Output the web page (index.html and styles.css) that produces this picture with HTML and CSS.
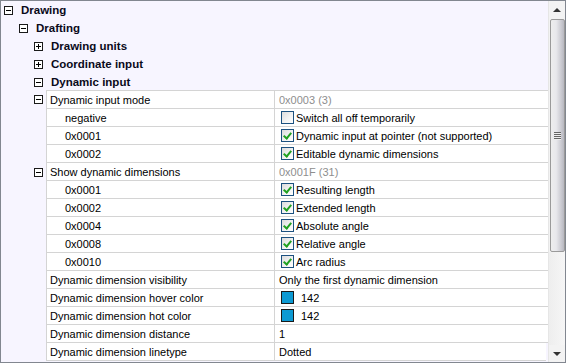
FILE: index.html
```html
<!DOCTYPE html>
<html lang="en">
<head>
  <meta charset="UTF-8" />
  <title>Drawing settings</title>
  <link rel="stylesheet" href="styles.css">
</head>
<body>
  <div class="panel">
    <div class="content">
      <div class="tree-row lvl0"><span class="exp minus"></span><span class="tree-label">Drawing</span></div>
      <div class="tree-row lvl1"><span class="exp minus"></span><span class="tree-label">Drafting</span></div>
      <div class="tree-row lvl2"><span class="exp plus"></span><span class="tree-label">Drawing units</span></div>
      <div class="tree-row lvl2"><span class="exp plus"></span><span class="tree-label">Coordinate input</span></div>
      <div class="tree-row lvl2"><span class="exp minus"></span><span class="tree-label">Dynamic input</span></div>

      <div class="grid">
        <div class="row group">
          <div class="gutter"><span class="exp minus"></span></div>
          <div class="name">Dynamic input mode</div>
          <div class="value muted">0x0003 (3)</div>
        </div>
        <div class="row sub">
          <div class="gutter"></div>
          <div class="name">negative</div>
          <div class="value"><span class="check"></span>Switch all off temporarily</div>
        </div>
        <div class="row sub">
          <div class="gutter"></div>
          <div class="name">0x0001</div>
          <div class="value"><span class="check on"></span>Dynamic input at pointer (not supported)</div>
        </div>
        <div class="row sub">
          <div class="gutter"></div>
          <div class="name">0x0002</div>
          <div class="value"><span class="check on"></span>Editable dynamic dimensions</div>
        </div>
        <div class="row group">
          <div class="gutter"><span class="exp minus"></span></div>
          <div class="name">Show dynamic dimensions</div>
          <div class="value muted">0x001F (31)</div>
        </div>
        <div class="row sub">
          <div class="gutter"></div>
          <div class="name">0x0001</div>
          <div class="value"><span class="check on"></span>Resulting length</div>
        </div>
        <div class="row sub">
          <div class="gutter"></div>
          <div class="name">0x0002</div>
          <div class="value"><span class="check on"></span>Extended length</div>
        </div>
        <div class="row sub">
          <div class="gutter"></div>
          <div class="name">0x0004</div>
          <div class="value"><span class="check on"></span>Absolute angle</div>
        </div>
        <div class="row sub">
          <div class="gutter"></div>
          <div class="name">0x0008</div>
          <div class="value"><span class="check on"></span>Relative angle</div>
        </div>
        <div class="row sub">
          <div class="gutter"></div>
          <div class="name">0x0010</div>
          <div class="value"><span class="check on"></span>Arc radius</div>
        </div>
        <div class="row">
          <div class="gutter"></div>
          <div class="name">Dynamic dimension visibility</div>
          <div class="value">Only the first dynamic dimension</div>
        </div>
        <div class="row">
          <div class="gutter"></div>
          <div class="name">Dynamic dimension hover color</div>
          <div class="value"><span class="swatch"></span>142</div>
        </div>
        <div class="row">
          <div class="gutter"></div>
          <div class="name">Dynamic dimension hot color</div>
          <div class="value"><span class="swatch"></span>142</div>
        </div>
        <div class="row">
          <div class="gutter"></div>
          <div class="name">Dynamic dimension distance</div>
          <div class="value">1</div>
        </div>
        <div class="row last">
          <div class="gutter"></div>
          <div class="name">Dynamic dimension linetype</div>
          <div class="value">Dotted</div>
        </div>
      </div>
    </div>

    <div class="scrollbar">
      <div class="arrow up"></div>
      <div class="thumb"><span class="grip"></span></div>
      <div class="track"></div>
      <div class="arrow down"></div>
    </div>
  </div>
</body>
</html>
```

FILE: styles.css
```css
body {
  margin: 0;
  padding: 0;
  font-family: "Liberation Sans", Arial, sans-serif;
  font-size: 11px;
  color: #000;
}

.panel {
  width: 566px;
  height: 363px;
  box-sizing: border-box;
  border: 1px solid #828790;
  background-color: #f7f5ff;
  display: flex;
  overflow: hidden;
}

.content {
  flex: 1;
  display: flex;
  flex-direction: column;
  padding-top: 0;
}

.scrollbar {
  width: 17px;
  display: flex;
  flex-direction: column;
  background-color: #f3f3f3;
  border-left: 1px solid #e6e6e6;
  box-sizing: border-box;
}

/* tree part */

.tree-row {
  height: 18px;
  display: flex;
  align-items: center;
}

.lvl0 { padding-left: 3px; }
.lvl1 { padding-left: 18px; }
.lvl2 { padding-left: 33px; }

.tree-label {
  font-weight: bold;
  font-size: 11.5px;
  margin-left: 8px;
  color: #0a0a1a;
}

.exp {
  width: 9px;
  height: 9px;
  box-sizing: border-box;
  border: 1px solid #1a1a1a;
  background-color: #fff;
  position: relative;
  flex: none;
}

.exp::before {
  content: "";
  position: absolute;
  left: 1px;
  top: 3px;
  width: 5px;
  height: 1px;
  background-color: #000;
}

.exp.plus::after {
  content: "";
  position: absolute;
  left: 3px;
  top: 1px;
  width: 1px;
  height: 5px;
  background-color: #000;
}

/* property grid */

.grid {
  display: flex;
  flex-direction: column;
}

.row {
  height: 18px;
  display: flex;
}

.gutter {
  width: 45px;
  flex: none;
  display: flex;
  align-items: center;
  padding-left: 33px;
  box-sizing: border-box;
}

.name,
.value {
  background-color: #fff;
  border-bottom: 1px solid #d4d4d4;
  display: flex;
  align-items: center;
  box-sizing: border-box;
  white-space: nowrap;
}

.row:first-child .name,
.row:first-child .value {
  border-top: 1px solid #d4d4d4;
}

.row:first-child {
  height: 19px;
  margin-top: -1px;
}

.name {
  width: 229px;
  border-left: 1px solid #d4d4d4;
  border-right: 1px solid #d4d4d4;
  padding-left: 3px;
}

.sub .name {
  padding-left: 18px;
}

.value {
  flex: 1;
  padding-left: 4px;
}

.last .value {
  margin-right: 2px;
}

.muted {
  color: #8e8e8e;
}

.check {
  width: 13px;
  height: 13px;
  box-sizing: border-box;
  border: 1px solid #1c5180;
  background: linear-gradient(135deg, #dcdcdc 0%, #f4f4f4 60%, #fff 100%);
  margin-left: 2px;
  margin-right: 2px;
  position: relative;
  flex: none;
}

.check.on::after {
  content: "";
  position: absolute;
  left: 3px;
  top: 1px;
  width: 3px;
  height: 6px;
  border-right: 2px solid #21a121;
  border-bottom: 2px solid #21a121;
  transform: rotate(40deg);
}

.swatch {
  width: 13px;
  height: 13px;
  box-sizing: border-box;
  border: 1px solid #1a1a1a;
  background-color: #0d9ad3;
  margin-left: 2px;
  margin-right: 7px;
  flex: none;
}

/* scrollbar */

.arrow {
  height: 17px;
  flex: none;
  display: flex;
  align-items: center;
  justify-content: center;
}

.arrow::before {
  content: "";
  border-left: 4px solid transparent;
  border-right: 4px solid transparent;
}

.arrow.up::before {
  border-bottom: 4px solid #333;
}

.arrow.down::before {
  border-top: 4px solid #333;
}

.thumb {
  height: 233px;
  margin: 1px 0 0 1px;
  border: 1px solid #9a9a9a;
  border-radius: 2px;
  background: linear-gradient(to right, #eeeeee 0%, #e8e8ec 40%, #c9c9d0 80%, #b8b8c0 100%);
  display: flex;
  align-items: center;
  justify-content: center;
  box-sizing: border-box;
}

.grip {
  width: 7px;
  height: 8px;
  background: repeating-linear-gradient(to bottom, #666 0, #666 1px, #eee 1px, #eee 2px);
}

.track {
  flex: 1;
  background: linear-gradient(to right, #eeeeee, #f6f6f6);
}
```
